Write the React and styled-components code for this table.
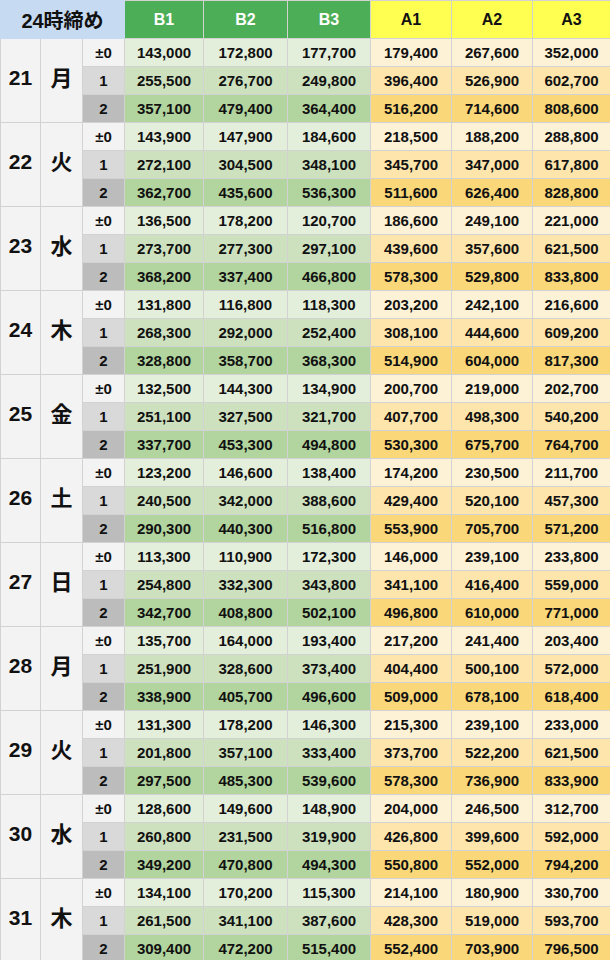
import React from "react";
import styled, { createGlobalStyle } from "styled-components";

const GlobalStyle = createGlobalStyle`
  html, body {
    margin: 0;
    padding: 0;
    background: #ffffff;
  }
  body {
    font-family: "Liberation Sans", "Noto Sans CJK JP", sans-serif;
    color: #111;
  }
`;

const COLS = [40, 42, 42, 79, 84, 83, 81, 81, 78];

const OFFSETS = ["±0", "1", "2"];

const DAYS = [
  ["21", "月", [
    ["143,000", "172,800", "177,700", "179,400", "267,600", "352,000"],
    ["255,500", "276,700", "249,800", "396,400", "526,900", "602,700"],
    ["357,100", "479,400", "364,400", "516,200", "714,600", "808,600"],
  ]],
  ["22", "火", [
    ["143,900", "147,900", "184,600", "218,500", "188,200", "288,800"],
    ["272,100", "304,500", "348,100", "345,700", "347,000", "617,800"],
    ["362,700", "435,600", "536,300", "511,600", "626,400", "828,800"],
  ]],
  ["23", "水", [
    ["136,500", "178,200", "120,700", "186,600", "249,100", "221,000"],
    ["273,700", "277,300", "297,100", "439,600", "357,600", "621,500"],
    ["368,200", "337,400", "466,800", "578,300", "529,800", "833,800"],
  ]],
  ["24", "木", [
    ["131,800", "116,800", "118,300", "203,200", "242,100", "216,600"],
    ["268,300", "292,000", "252,400", "308,100", "444,600", "609,200"],
    ["328,800", "358,700", "368,300", "514,900", "604,000", "817,300"],
  ]],
  ["25", "金", [
    ["132,500", "144,300", "134,900", "200,700", "219,000", "202,700"],
    ["251,100", "327,500", "321,700", "407,700", "498,300", "540,200"],
    ["337,700", "453,300", "494,800", "530,300", "675,700", "764,700"],
  ]],
  ["26", "土", [
    ["123,200", "146,600", "138,400", "174,200", "230,500", "211,700"],
    ["240,500", "342,000", "388,600", "429,400", "520,100", "457,300"],
    ["290,300", "440,300", "516,800", "553,900", "705,700", "571,200"],
  ]],
  ["27", "日", [
    ["113,300", "110,900", "172,300", "146,000", "239,100", "233,800"],
    ["254,800", "332,300", "343,800", "341,100", "416,400", "559,000"],
    ["342,700", "408,800", "502,100", "496,800", "610,000", "771,000"],
  ]],
  ["28", "月", [
    ["135,700", "164,000", "193,400", "217,200", "241,400", "203,400"],
    ["251,900", "328,600", "373,400", "404,400", "500,100", "572,000"],
    ["338,900", "405,700", "496,600", "509,000", "678,100", "618,400"],
  ]],
  ["29", "火", [
    ["131,300", "178,200", "146,300", "215,300", "239,100", "233,000"],
    ["201,800", "357,100", "333,400", "373,700", "522,200", "621,500"],
    ["297,500", "485,300", "539,600", "578,300", "736,900", "833,900"],
  ]],
  ["30", "水", [
    ["128,600", "149,600", "148,900", "204,000", "246,500", "312,700"],
    ["260,800", "231,500", "319,900", "426,800", "399,600", "592,000"],
    ["349,200", "470,800", "494,300", "550,800", "552,000", "794,200"],
  ]],
  ["31", "木", [
    ["134,100", "170,200", "115,300", "214,100", "180,900", "330,700"],
    ["261,500", "341,100", "387,600", "428,300", "519,000", "593,700"],
    ["309,400", "472,200", "515,400", "552,400", "703,900", "796,500"],
  ]],
];

const HEAD_BG = { title: "#c6daf2", b: "#4cae56", a: "#ffff52" };
const OFFSET_BG = ["#f3f3f3", "#d9d9d9", "#bcbcbc"];
const NUM_BG = {
  b: ["#e4efdb", "#cde1bf", "#b2d49e"],
  a: ["#fdf2d6", "#fde5ac", "#fad778"],
};

const Sheet = styled.table`
  border-collapse: collapse;
  table-layout: fixed;
  width: 610px;
  font-weight: 700;
`;

const Cell = styled.td`
  border: 1px solid #d2d2d2;
  padding: 0;
  text-align: center;
  vertical-align: middle;
  white-space: nowrap;
  overflow: hidden;
`;

const HeadCell = styled(Cell).attrs({ as: "th" })`
  height: 37px;
  background: ${(p) => HEAD_BG[p.$kind]};
  color: ${(p) => (p.$kind === "b" ? "#ffffff" : "#111")};
  font-size: ${(p) => (p.$kind === "title" ? "20px" : "16px")};
  font-weight: 700;
  border-color: ${(p) => (p.$kind === "title" ? "#c6daf2" : "#d2d2d2")};
`;

const DayCell = styled(Cell)`
  background: #f3f3f3;
  font-size: ${(p) => (p.$cjk ? "22px" : "21px")};
  padding-bottom: ${(p) => (p.$cjk ? "9px" : "5px")};
`;

const OffsetCell = styled(Cell)`
  height: 27px;
  background: ${(p) => OFFSET_BG[p.$level]};
  font-size: 15px;
`;

const NumCell = styled(Cell)`
  background: ${(p) => NUM_BG[p.$group][p.$level]};
  font-size: 15px;
`;

const DayGroup = ({ day, weekday, rows }) =>
  rows.map((values, level) => (
    <tr key={level}>
      {level === 0 && (
        <>
          <DayCell rowSpan={3}>{day}</DayCell>
          <DayCell rowSpan={3} $cjk>
            {weekday}
          </DayCell>
        </>
      )}
      <OffsetCell $level={level}>{OFFSETS[level]}</OffsetCell>
      {values.map((v, i) => (
        <NumCell key={i} $group={i < 3 ? "b" : "a"} $level={level}>
          {v}
        </NumCell>
      ))}
    </tr>
  ));

export default function App() {
  return (
    <>
      <GlobalStyle />
      <Sheet>
        <colgroup>
          {COLS.map((w, i) => (
            <col key={i} style={{ width: w }} />
          ))}
        </colgroup>
        <thead>
          <tr>
            <HeadCell colSpan={3} $kind="title">
              24時締め
            </HeadCell>
            {["B1", "B2", "B3"].map((h) => (
              <HeadCell key={h} $kind="b">
                {h}
              </HeadCell>
            ))}
            {["A1", "A2", "A3"].map((h) => (
              <HeadCell key={h} $kind="a">
                {h}
              </HeadCell>
            ))}
          </tr>
        </thead>
        <tbody>
          {DAYS.map(([day, weekday, rows]) => (
            <DayGroup key={day} day={day} weekday={weekday} rows={rows} />
          ))}
        </tbody>
      </Sheet>
    </>
  );
}
